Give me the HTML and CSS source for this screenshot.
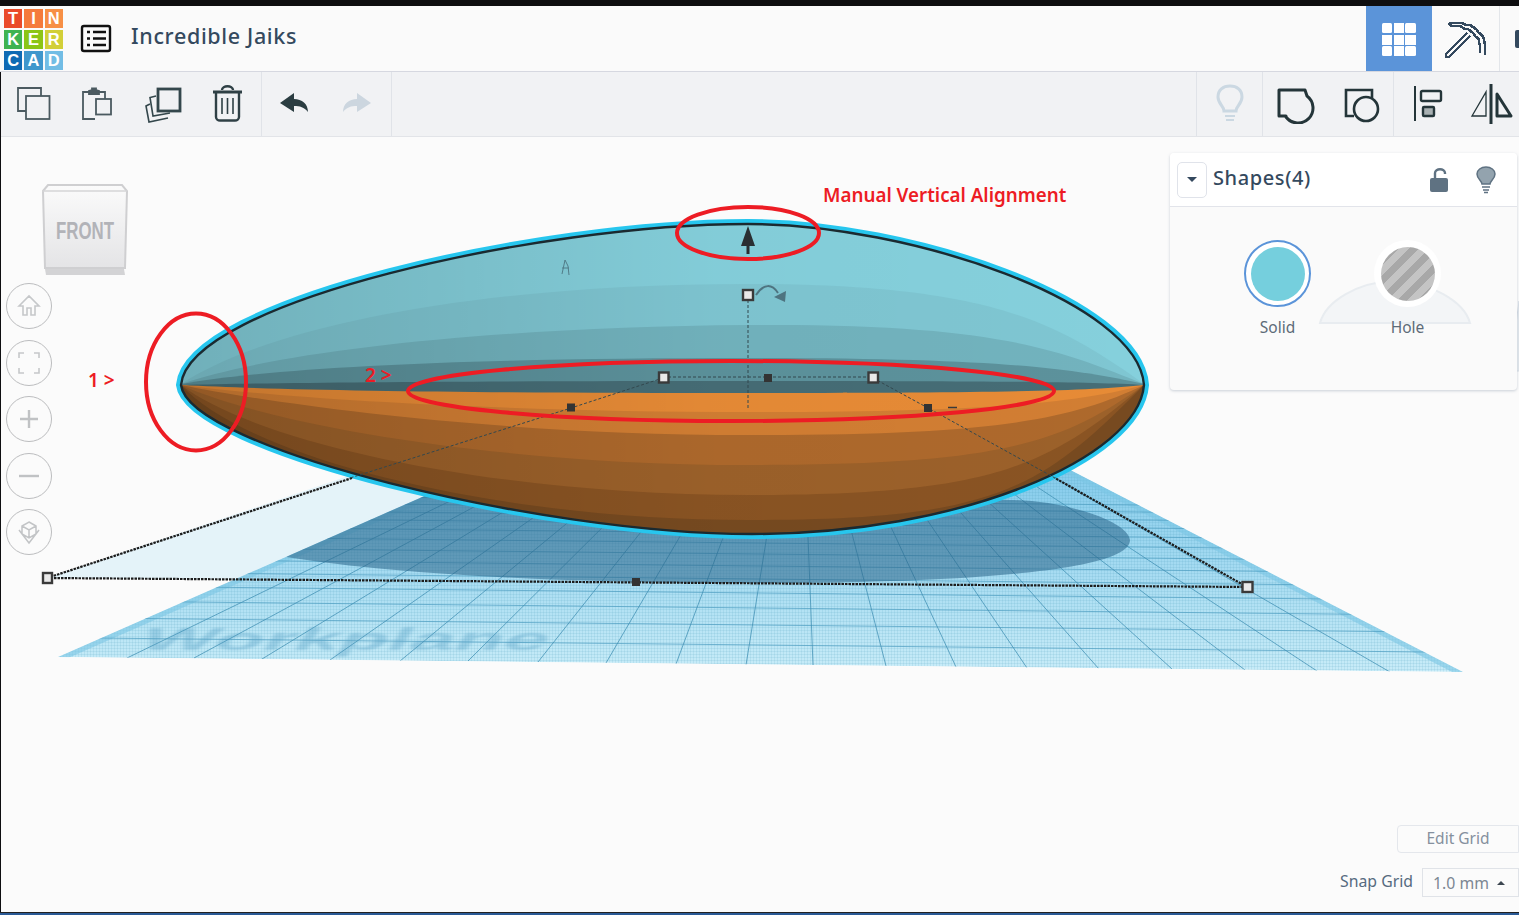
FILE: index.html
```html
<!DOCTYPE html>
<html lang="en">
<head>
<meta charset="utf-8">
<title>Incredible Jaiks</title>
<link rel="stylesheet" href="styles.css">
</head>
<body>
<div class="app">
  <header class="header">
    <div class="logo">
      <span class="t1">T</span><span class="t2">I</span><span class="t3">N</span>
      <span class="t4">K</span><span class="t5">E</span><span class="t6">R</span>
      <span class="t7">C</span><span class="t8">A</span><span class="t9">D</span>
    </div>
    <svg class="menu-icon" viewBox="80 22 32 30"><rect x="82" y="24" width="28" height="25" rx="2" fill="none" stroke="#111" stroke-width="2.4"/><path d="M87 30h3M87 36.500h3M87 43h3M93 30h13M93 36.500h13M93 43h13" stroke="#111" stroke-width="2.600" fill="none"/></svg>
    <div class="title">Incredible Jaiks</div>
    <div class="header-right">
      <div class="tab tab-active">
        <svg viewBox="1380 18 38 38" width="38" height="38"><g fill="#fff"><rect x="1382" y="21" width="10" height="10" rx="1.500"/><rect x="1394" y="21" width="10" height="10"/><rect x="1405" y="21" width="11" height="10" rx="1.500"/><rect x="1382" y="33" width="10" height="10"/><rect x="1394" y="33" width="10" height="10"/><rect x="1405" y="33" width="11" height="10"/><rect x="1382" y="44" width="10" height="10" rx="1.500"/><rect x="1394" y="44" width="10" height="10"/><rect x="1405" y="44" width="11" height="10" rx="1.500"/></g></svg>
      </div>
      <div class="tab tab-pick">
        <svg viewBox="1446 16 44 42" width="44" height="42" shape-rendering="crispEdges"><g fill="none" stroke="#34495e" stroke-width="2.600"><path d="M1451 21h13l4 2h4l6 4 3 4 3 2 2 4v2l1 3v11"/><path d="M1451 21l2 3h9l5 3h3l5 4 3 4 3 2v3l1 4v7"/><path d="M1469 31l-21 21v3h3l21-21"/></g></svg>
      </div>
      <div class="tab tab-cut"><span class="cut-icon"></span></div>
    </div>
  </header>

  <nav class="toolbar">
    <div class="tool-group tools-left">
      <svg viewBox="14 84 40 40" width="40" height="40"><g fill="none" stroke="#4b5a60" stroke-width="1.800"><path d="M26 111h-8V88h23v8"/><rect x="26" y="96" width="23.500" height="23"/></g></svg>
      <svg viewBox="77 84 40 40" width="40" height="40"><g fill="none" stroke="#4b5a60" stroke-width="1.800"><path d="M95 119H83V92h6M99 92h6v7"/><rect x="96" y="99" width="15" height="15.500"/><path d="M89 94v-3l3-1v-1.500h4V90l3 1v3z" fill="#4b5a60"/></g></svg>
      <svg viewBox="144 84 40 40" width="40" height="40"><g fill="none" stroke="#34474c"><rect x="158" y="89" width="22" height="22" stroke-width="2.800"/><path d="M156 96l-6 1.500 3 18.500 17-3" stroke-width="1.600"/><path d="M150 104l-4 2 3 16 19-4" stroke-width="1.600"/></g></svg>
      <svg viewBox="208 84 40 40" width="40" height="40"><g fill="none" stroke="#2f4045" stroke-width="2.400"><path d="M213 92h29" stroke-width="3"/><path d="M222 90c0-5 11-5 11 0"/><path d="M216 93v24c0 2 2 3.500 4 3.500h15c2 0 4-1.500 4-3.500V93"/><path d="M222 98v16M227.500 98v16M233 98v16" stroke-width="1.600"/></g></svg>
    </div>
    <div class="tool-group tools-history">
      <svg viewBox="275 84 40 40" width="40" height="40"><path d="M281 103l14-10v6c8 0 14 5 14 13-4-5-8-6-14-6v6z" fill="#2b3d41"/></svg>
      <svg viewBox="338 84 40 40" width="40" height="40"><path d="M372 103l-14-10v6c-8 0-14 5-14 13 4-5 8-6 14-6v6z" fill="#ccd6df"/></svg>
    </div>
    <div class="tool-spacer"></div>
    <div class="tool-group tools-bulb">
      <svg viewBox="1209 84 40 40" width="40" height="40"><g fill="none" stroke="#cbd8e2" stroke-width="3"><path d="M1223 111c0-5-6-7-6-14 0-7 5-11 12-11s12 4 12 11c0 7-6 9-6 14z"/><path d="M1224 116h10M1225 120h8" stroke-width="2"/></g></svg>
    </div>
    <div class="tool-group tools-shape">
      <svg viewBox="1276 84 40 40" width="40" height="40"><path d="M1280 90H1306L1308 96A15 15 0 1 1 1287 117V116H1280Z" fill="none" stroke="#243539" stroke-width="3" stroke-linejoin="round"/></svg>
      <svg viewBox="1342 84 40 40" width="40" height="40"><g fill="none" stroke="#243539" stroke-width="2.600"><path d="M1355 116h-8V90h26v8"/><circle cx="1367" cy="109" r="12"/></g></svg>
    </div>
    <div class="tool-group tools-arrange">
      <svg viewBox="1407 84 40 40" width="40" height="40"><g fill="none" stroke="#243539"><path d="M1415 86v35" stroke-width="2"/><rect x="1421" y="91" width="20" height="10" rx="1.500" stroke-width="2.400"/><rect x="1423" y="107" width="11" height="9" rx="1" fill="#a8b0b2" stroke-width="2.400"/></g></svg>
      <svg viewBox="1467 82 46 44" width="46" height="44"><g fill="none" stroke="#243539"><path d="M1491 84v40" stroke-width="3"/><path d="M1472 116l14-24v24z" stroke-width="1.300"/><path d="M1497 94l14 22h-14z" stroke-width="3" stroke-linejoin="round"/></g></svg>
    </div>
  </nav>

  <main class="canvas">
    <svg class="scene" viewBox="0 137 1519 775" width="1519" height="775">
      <defs>
        <linearGradient id="plane" x1="0" y1="0" x2="0" y2="1"><stop offset="0" stop-color="#56b4e2"/><stop offset="1" stop-color="#c8ecf8"/></linearGradient>
        <linearGradient id="cube" x1="0" y1="0" x2="0" y2="1"><stop offset="0" stop-color="#fbfbfb"/><stop offset="1" stop-color="#e4e4e6"/></linearGradient>
        <linearGradient id="bodyShade" x1="0" y1="0" x2="1" y2="0"><stop offset="0" stop-color="#000" stop-opacity=".16"/><stop offset=".55" stop-color="#000" stop-opacity=".02"/><stop offset="1" stop-color="#000" stop-opacity="0"/></linearGradient>
        <pattern id="mesh" width="3" height="3" patternUnits="userSpaceOnUse"><path d="M0 .5h3M.5 0v3" stroke="#3f93b8" stroke-opacity=".12" stroke-width="1"/></pattern>
        <clipPath id="planeClip"><path d="M58 657L800 331 1463 672z"/></clipPath>
        <clipPath id="bodyClip"><path id="bodyShape" d="M181 385C188 302 540 224 748 224C910 224 1138 302 1144 385C1138 458 960 534 752 534C540 534 188 448 181 385Z"/></clipPath>
      </defs>

      <path d="M47 578L360 472 520 500 236 580z" fill="#e4f3f9"/>

      <g clip-path="url(#planeClip)">
        <path d="M58 657L800 331 1463 672z" fill="url(#plane)"/>
        <path d="M58 657L800 331 1463 672z" fill="url(#mesh)"/>
        <path d="M58 657L800 331 1463 672" fill="none" stroke="#7cc7e4" stroke-width="10" stroke-opacity=".6"/>
        <path d="M0 637L1519 653M0 617L1519 633M0 600L1519 616M0 585L1519 601M0 571L1519 587M0 558L1519 574M0 546L1519 562M0 535L1519 551M0 525L1519 541M0 516L1519 532M0 508L1519 524M0 500L1519 516M0 493L1519 509" stroke="#4d9cc0" stroke-opacity=".7" fill="none"/>
        <path d="M127 658L800 331M194 658L800 331M262 659L800 331M330 660L800 331M400 661L800 331M468 661L800 331M538 662L800 331M606 663L800 331M676 664L800 331M746 665L800 331M813 665L800 331M886 666L800 331M956 667L800 331M1027 668L800 331M1099 669L800 331M1172 669L800 331M1245 670L800 331M1317 671L800 331M1390 672L800 331" stroke="#3f8fb3" stroke-opacity=".75" fill="none"/>
        <path d="M286 557C400 575 560 582 720 583C860 584 1130 580 1130 540C1128 520 1060 500 1010 500L400 480z" fill="#2a6488" fill-opacity=".55"/>
      </g>
      <text class="plane-label" transform="translate(136 650) skewX(-32) scale(2.500 1)">Workplane</text>

      <use href="#bodyShape" fill="none" stroke="#27c6ee" stroke-width="10"/>
      <g clip-path="url(#bodyClip)">
        <rect x="170" y="215" width="990" height="330" fill="#85d0dc"/>
        <path d="M181 384C280 320 500 284 748 284S1060 325 1144 384V540H181z" fill="#7fc6d2"/>
        <path d="M181 384C280 350 500 327 748 325S1060 350 1144 384V540H181z" fill="#72b3be"/>
        <path d="M181 384C290 365 500 358 748 358S1070 368 1144 384V540H181z" fill="#5c929c"/>
        <path d="M181 385C300 382 500 381 748 381S1090 382 1144 385V540H181z" fill="#466d76"/>
        <path d="M181 385C300 391 500 393 748 393S1090 391 1144 385V540H181z" fill="#e78b36"/>
        <path d="M181 385C280 398 500 412 748 412S1080 402 1144 385V540H181z" fill="#d27e33"/>
        <path d="M181 385C280 405 500 435 748 435S1070 420 1144 385V540H181z" fill="#ae692c"/>
        <path d="M181 385C270 425 500 465 748 465S1060 445 1144 385V540H181z" fill="#9c612a"/>
        <path d="M181 385C260 445 500 495 748 495S1050 465 1144 385V540H181z" fill="#8a5423"/>
        <path d="M181 385C250 460 500 520 748 520S1040 490 1144 385V540H181z" fill="#774a20"/>
        <rect x="170" y="215" width="990" height="330" fill="url(#bodyShade)"/>
      </g>
      <use href="#bodyShape" fill="none" stroke="#1b2a30" stroke-width="2.400"/>

      <g fill="none" stroke="#1c1c1c" stroke-width="2.200" stroke-dasharray="2.500 1">
        <path d="M47 578L352 478M47 578L1247 587M1247 587L1055 478"/>
      </g>
      <g fill="none" stroke="#33484e" stroke-width="1" stroke-dasharray="3 2">
        <path d="M663 377H873M748 300V408M663 378L571 408 350 478M873 378L928 408 1055 478"/>
      </g>
      <path d="M948 407.500h9" stroke="#3a3a3a" stroke-width="1.500"/>
      <path d="M748 226l-7 20h5.500v8h3v-8h5.500z" fill="#2a2f33"/>
      <path d="M756 295c8-12 16-11 22-2" fill="none" stroke="#4e7480" stroke-width="2"/>
      <path d="M786 291l-1 11-11-5z" fill="#4e7480"/>
      <path d="M562 274l3-14 3 6 1 9M562 268h7" fill="none" stroke="#517c88" stroke-width="1"/>

      <g fill="#e9e9e9" stroke="#3a3a3a" stroke-width="2.400">
        <rect x="43" y="573" width="9" height="10"/>
        <rect x="1242.500" y="582" width="10" height="10"/>
        <rect x="743" y="290" width="10" height="10"/>
        <rect x="659" y="372.500" width="9.500" height="10"/>
        <rect x="868.500" y="372.500" width="9.500" height="10"/>
      </g>
      <g fill="#333">
        <rect x="632" y="578" width="8" height="8"/>
        <rect x="764" y="374" width="8" height="8"/>
        <rect x="567" y="403.500" width="8" height="8"/>
        <rect x="924" y="404" width="8" height="8"/>
      </g>

      <g fill="none" stroke="#ed1c24" stroke-width="4">
        <ellipse cx="748" cy="233" rx="71" ry="26"/>
        <ellipse cx="731" cy="391" rx="323" ry="30"/>
        <ellipse cx="196" cy="382" rx="50" ry="68.500"/>
      </g>
      <text class="note note-title" x="823" y="202">Manual Vertical Alignment</text>
      <text class="note" x="88" y="387">1 &gt;</text>
      <text class="note" x="365" y="382">2 &gt;</text>

      <path d="M43 191l5-6h74l5 6-2 77H45z" fill="url(#cube)" stroke="#cfcfd1" stroke-width="2"/>
      <path d="M42 191h85" stroke="#d4d4d6" stroke-width="1.500"/>
      <path d="M45 269h79l1 6H46z" fill="#d3d3d5"/>
      <text class="cube-label" x="56" y="239" textLength="58" lengthAdjust="spacingAndGlyphs">FRONT</text>

      <path d="M1510 371l9-70v70z" fill="#e9edf1" stroke="#d8dfe6"/>
    </svg>

    <div class="nav-buttons">
      <button class="nav-btn"><svg viewBox="0 0 24 24" width="24" height="24"><path d="M2 12L12 2l10 10h-4v9h-4v-7h-4v7H6v-9z" fill="none" stroke="#c6c8ca" stroke-width="1.600"/></svg></button>
      <button class="nav-btn"><svg viewBox="0 0 24 24" width="24" height="24"><path d="M2 7V2h5M17 2h5v5M22 17v5h-5M7 22H2v-5" fill="none" stroke="#c6c8ca" stroke-width="1.600"/></svg></button>
      <button class="nav-btn"><svg viewBox="0 0 24 24" width="24" height="24"><path d="M12 3v18M3 12h18" fill="none" stroke="#c0c2c4" stroke-width="2.400"/></svg></button>
      <button class="nav-btn"><svg viewBox="0 0 24 24" width="24" height="24"><path d="M2 12h20" fill="none" stroke="#c0c2c4" stroke-width="2.400"/></svg></button>
      <button class="nav-btn"><svg viewBox="0 0 26 26" width="26" height="26"><path d="M13 3l7 4v8l-7 4-7-4V7zM6 7l7 4 7-4M13 11v8M3 11l10 13 10-13" fill="none" stroke="#c2c4c6" stroke-width="1.500"/></svg></button>
    </div>

    <section class="panel">
      <svg class="panel-hill" viewBox="0 0 154 46" width="154" height="46"><path d="M2 44C8 22 40 3 76 2c36 1 70 20 76 42z" fill="#f3f5f7" stroke="#e8ecf0" stroke-width="2"/></svg>
      <div class="panel-head">
        <button class="panel-toggle"><span class="caret"></span></button>
        <span class="panel-title">Shapes(4)</span>
        <svg class="panel-lock" viewBox="0 0 20 26" width="20" height="26"><path d="M6 11V6c0-5 10-5 10 0v1" fill="none" stroke="#5f7282" stroke-width="2.400"/><rect x="1" y="11" width="18" height="14" rx="2" fill="#5f7282"/></svg>
        <svg class="panel-bulb" viewBox="0 0 20 28" width="20" height="28"><path d="M6 18c0-3-5-5-5-10 0-4 4-7 9-7s9 3 9 7c0 5-5 7-5 10z" fill="#93a3ae" stroke="#5f7282" stroke-width="1.500"/><path d="M6 21h8M7 24h6M8 26.500h4" stroke="#5f7282" stroke-width="1.500"/></svg>
      </div>
      <div class="panel-body">
        <div class="swatch-item"><div class="swatch swatch-solid"><span class="fill-solid"></span></div><span class="swatch-label">Solid</span></div>
        <div class="swatch-item"><div class="swatch swatch-hole"><span class="fill-hole"></span></div><span class="swatch-label">Hole</span></div>
      </div>
    </section>

    <div class="grid-controls">
      <button class="edit-grid">Edit Grid</button>
      <div class="snap-row">
        <span class="snap-label">Snap Grid</span>
        <div class="snap-select"><span>1.0 mm</span><span class="caret-up"></span></div>
      </div>
    </div>
  </main>
  <div class="footer-bar"></div>
</div>
</body>
</html>
```
FILE: styles.css
```css
* { box-sizing: border-box; }
html, body { margin: 0; padding: 0; height: 915px; overflow: hidden; background: #222; }
body { font-family: "Noto Sans", "Open Sans", sans-serif; }
button { font: inherit; }
svg { display: block; }

.app {
  width: 1519px;
  height: 915px;
  display: flex;
  flex-direction: column;
  background: #0e0e10;
  padding-top: 6px;
  padding-left: 1px;
  overflow: hidden;
}

.header {
  height: 66px;
  flex: none;
  background: #fafafa;
  display: flex;
  align-items: center;
  margin-left: -1px;
  padding-left: 4px;
  box-shadow: inset 0 -1px 0 #d6d8e0;
}
.logo {
  width: 59px;
  height: 59px;
  display: grid;
  grid-template-columns: repeat(3, 1fr);
  grid-template-rows: repeat(3, 1fr);
  gap: 2px;
  align-self: flex-start;
  margin-top: 3px;
  flex: none;
}
.logo span {
  display: flex;
  align-items: center;
  justify-content: center;
  color: #fff;
  font: bold 16.500px "Liberation Sans", sans-serif;
}
.t1 { background: #ea4a2a; }
.t2 { background: #f57a3c; }
.t3 { background: #f78f45; }
.t4 { background: #3eb350; }
.t5 { background: #8cc516; }
.t6 { background: #d2cf38; }
.t7 { background: #0e6ab4; }
.t8 { background: #3f97cc; }
.t9 { background: #72bde5; }

.menu-icon { width: 32px; height: 30px; margin-left: 17px; flex: none; }
.title {
  margin-left: 19px;
  margin-top: -8px;
  font-size: 21.500px;
  font-weight: 500;
  letter-spacing: .65px;
  color: #34495e;
  white-space: nowrap;
}
.header-right { margin-left: auto; display: flex; height: 65px; align-self: flex-start; }
.tab { display: flex; align-items: center; justify-content: center; height: 65px; border-right: 1px solid #e3e6ea; }
.tab-active { width: 66px; background: #5b94d9; border-right: 0; }
.tab-pick { width: 68px; }
.tab-cut { width: 19px; border-right: 0; justify-content: flex-end; }
.cut-icon { width: 4px; height: 18px; background: #34495e; border-radius: 2px 0 0 2px; }

.toolbar {
  height: 65px;
  flex: none;
  display: flex;
  background: #f1f2f4;
  border-bottom: 1px solid #e2e4e8;
}
.tool-group { display: grid; align-items: center; justify-items: center; height: 64px; }
.tools-left { grid-template-columns: 60px 66px 67px 61px; width: 261px; padding-left: 3px; border-right: 1px solid #e0e3e8; }
.tools-history { grid-template-columns: 63px 64px; width: 130px; border-right: 1px solid #e0e3e8; }
.tool-spacer { flex: 1; }
.tools-bulb { grid-template-columns: 65px; width: 67px; border-left: 1px solid #e0e3e8; border-right: 1px solid #e0e3e8; }
.tools-shape { grid-template-columns: 64px 67px; width: 131px; border-right: 1px solid #e0e3e8; }
.tools-arrange { grid-template-columns: 66px 59px; width: 125px; }

.canvas {
  position: relative;
  flex: 1;
  background: #fbfbfb;
  overflow: hidden;
}
.scene { position: absolute; left: -1px; top: 0; }

.plane-label {
  font: bold 32px "Liberation Sans", sans-serif;
  fill: #4f9cc0;
  fill-opacity: .34;
  filter: blur(.8px);
}
.note { font: 600 19px "Noto Sans", sans-serif; fill: #ed1c24; }
.note-title { font-size: 18.800px; }
.cube-label { font: bold 23px "Liberation Sans", sans-serif; fill: #b2b3b8; }

.nav-buttons {
  position: absolute;
  left: 5px;
  top: 146px;
  display: flex;
  flex-direction: column;
  gap: 10.500px;
}
.nav-btn {
  width: 46px;
  height: 46px;
  padding: 0;
  border-radius: 50%;
  border: 1px solid #bcbdbf;
  background: transparent;
  display: flex;
  align-items: center;
  justify-content: center;
}

.panel {
  position: absolute;
  left: 1169px;
  top: 16px;
  width: 347px;
  height: 237px;
  background: #fafafa;
  border-radius: 4px;
  box-shadow: 0 1px 3px rgba(110, 125, 150, .35);
}
.panel-hill { position: absolute; left: 148px; top: 126px; }
.panel-head {
  position: relative;
  height: 54px;
  background: #fff;
  border-bottom: 1px solid #e2e4ea;
  border-radius: 4px 4px 0 0;
  display: flex;
  align-items: center;
  padding: 0 21px 0 7px;
}
.panel-toggle {
  width: 30px;
  height: 36px;
  padding: 0;
  background: #fff;
  border: 1px solid #e0e3ea;
  border-radius: 5px;
  display: flex;
  align-items: center;
  justify-content: center;
}
.caret { width: 0; height: 0; border: 5px solid transparent; border-top: 5px solid #34495e; border-bottom: 0; }
.panel-title { margin-left: 6px; margin-top: -5px; font-size: 20px; font-weight: 500; letter-spacing: .6px; color: #34495e; }
.panel-lock { margin-left: auto; }
.panel-bulb { margin-left: 27px; }
.panel-body {
  position: relative;
  display: flex;
  padding: 33px 0 0 74px;
  gap: 63px;
}
.swatch-item { width: 67px; display: flex; flex-direction: column; align-items: center; gap: 10px; }
.swatch {
  width: 67px;
  height: 67px;
  border-radius: 50%;
  background: #fff;
  display: flex;
  align-items: center;
  justify-content: center;
}
.swatch-solid { border: 2.500px solid #5b94d9; }
.fill-solid { width: 54px; height: 54px; border-radius: 50%; background: #75cfdd; }
.fill-hole {
  width: 54px;
  height: 54px;
  border-radius: 50%;
  background: repeating-linear-gradient(135deg, #c4c4c4 0 7px, #a8a8a8 7px 14px);
}
.swatch-label { font-size: 15.500px; color: #5d6b78; line-height: 20px; }

.grid-controls {
  position: absolute;
  right: 0;
  top: 688px;
  display: flex;
  flex-direction: column;
  align-items: flex-end;
  gap: 15px;
}
.edit-grid {
  width: 122px;
  height: 28px;
  padding: 0 0 2px;
  background: #fbfbfb;
  border: 1px solid #e4e7ec;
  border-radius: 4px 0 0 4px;
  color: #85909e;
  font-size: 15.500px;
}
.snap-row { display: flex; align-items: center; gap: 9px; }
.snap-label { font-size: 15.800px; color: #566a80; margin-top: -4px; }
.snap-select {
  width: 97px;
  height: 29px;
  border: 1px solid #e0e3e8;
  display: flex;
  align-items: center;
  gap: 8px;
  padding-left: 10px;
  color: #7b8793;
  font-size: 15.800px;
}
.caret-up { width: 0; height: 0; border: 4.500px solid transparent; border-bottom: 4.500px solid #3c4650; border-top: 0; }

.footer-bar {
  height: 3px;
  flex: none;
  margin-left: -1px;
  background: #2a5a96;
  border-top: 1px solid #222;
}
```
